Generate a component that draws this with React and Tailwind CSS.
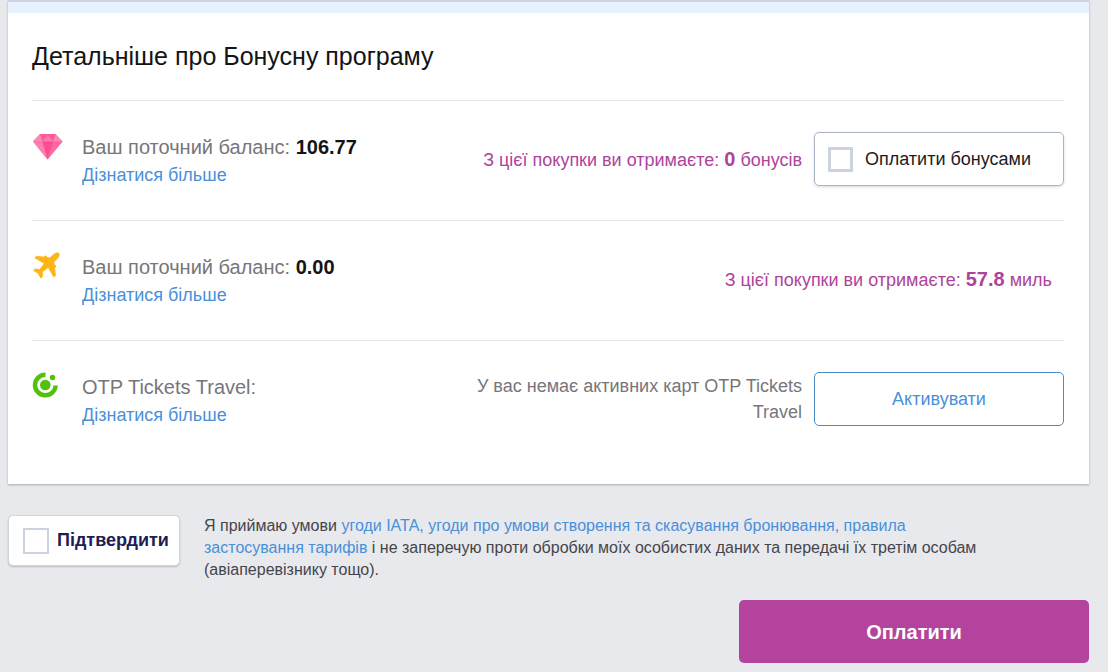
import React from "react";

function DiamondIcon() {
  return (
    <svg width="32" height="29" viewBox="0 0 32 29" aria-hidden="true">
      <path d="M8 2h15.500l7 7.500-15 18L1 9.500z" fill="#ff6ba6" />
      <path d="M8 2h7.700L10 9.500H1z" fill="#ff85b5" />
      <path d="M23.500 2h-7.800l5.800 7.500h9z" fill="#ff85b5" />
      <path d="M8 2l2.500 7.500L15.700 3.500 21 9.500l2.500-7.500z" fill="#fb5b9a" />
      <path d="M15.700 3.500l5.800 6H10z" fill="#ff79ae" />
      <path d="M10 9.500h11.500l-6 18z" fill="#fb4f93" />
      <path d="M1 9.500h9l5.500 18z" fill="#ff7db1" />
      <path d="M30.500 9.500h-9l-6 18z" fill="#ff68a3" />
    </svg>
  );
}

function PlaneIcon() {
  return (
    <svg width="28" height="28" viewBox="0 0 28 28" fill="#fcb514" aria-hidden="true">
      <path
        d="M26.600 1.300C25.300.4 23 1 21.500 2.500L18 5.900 4.500 4.200 2.800 5.700l9.600 5.900-4.700 6-4.400-.7-1.800 1.700 4.700 2.600 2.700 4.900 1.800-1.800-.5-4.300 6-4.700 5.700 9.700 1.600-1.800L21.800 9.900l3.600-3.500c1.500-1.500 2.400-3.900 1.200-5.100z"
        stroke="#fcb514"
        strokeWidth="0.800"
        strokeLinejoin="round"
      />
      <circle cx="13.500" cy="5" r="1.500" />
      <circle cx="22.700" cy="14.200" r="1.500" />
    </svg>
  );
}

function OtpIcon() {
  return (
    <svg width="27" height="27" viewBox="0 0 27 27" aria-hidden="true">
      <path d="M13.500 2.700A10.300 10.300 0 1 0 23.600 13.500" fill="none" stroke="#52c10b" strokeWidth="4.500" />
      <circle cx="13.300" cy="13" r="5.300" fill="#52c10b" />
      <circle cx="20.500" cy="5.500" r="2.700" fill="#52c10b" />
    </svg>
  );
}

function ProgramRow({ icon, title, value, children }) {
  return (
    <li className="flex h-[120px] justify-between border-t border-[#e5e5e5] pt-[31px]">
      <div className="flex">
        <div className="w-[50px] shrink-0">{icon}</div>
        <div className="whitespace-nowrap">
          <p className="text-[20px] leading-[30px] text-[#76767b]">
            {title} {value && <strong className="text-[#141414]">{value}</strong>}
          </p>
          <a href="#more" className="block text-[18px] leading-[26px] text-[#4a90d9]">
            Дізнатися більше
          </a>
        </div>
      </div>
      {children}
    </li>
  );
}

function Reward({ amount, unit }) {
  return (
    <p className="text-right text-[18px] leading-[26px] whitespace-nowrap text-[#ae439b]">
      З цієї покупки ви отримаєте: <strong className="text-[20px]">{amount}</strong> {unit}
    </p>
  );
}

export default function App() {
  return (
    <main className="min-h-screen bg-[#e8e9ed] pr-[19px] pb-[9px] pl-2 font-['Liberation_Sans',Arial,sans-serif]">
      <section className="bg-white shadow-[0_1px_2px_rgba(0,0,0,0.28)]">
        <div className="h-[13px] border-t-2 border-[#cdd3e3] bg-[#e8f1fe]" />
        <div className="pr-[25px] pb-6 pl-6">
          <h1 className="flex h-[87px] items-center text-[25px] text-[#141414]">
            Детальніше про Бонусну програму
          </h1>
          <ul>
            <ProgramRow icon={<DiamondIcon />} title="Ваш поточний баланс:" value="106.77">
              <div className="flex h-[54px] items-center gap-3">
                <Reward amount="0" unit="бонусів" />
                <label className="flex h-[54px] w-[250px] items-center gap-3 rounded-[5px] border border-[#abb3c6] px-[13px] text-[18px] text-[#1c1c1c] shadow-[0_1px_3px_rgba(0,0,0,0.15)]">
                  <input
                    type="checkbox"
                    className="size-[25px] shrink-0 appearance-none border-3 border-[#ccd3e0] bg-white checked:bg-[#4a90d9]"
                  />
                  Оплатити бонусами
                </label>
              </div>
            </ProgramRow>
            <ProgramRow icon={<PlaneIcon />} title="Ваш поточний баланс:" value="0.00">
              <div className="flex h-[54px] items-center pr-3">
                <Reward amount="57.8" unit="миль" />
              </div>
            </ProgramRow>
            <ProgramRow icon={<OtpIcon />} title="OTP Tickets Travel:">
              <div className="flex h-[54px] items-center gap-3">
                <p className="w-[330px] text-right text-[18px] leading-[26px] text-[#76767b]">
                  У вас немає активних карт OTP Tickets Travel
                </p>
                <button
                  type="button"
                  className="h-[54px] w-[250px] rounded-[5px] border border-[#4a8cc4] text-[18px] text-[#4a90d9]"
                >
                  Активувати
                </button>
              </div>
            </ProgramRow>
          </ul>
        </div>
      </section>

      <div className="mt-[31px] flex items-start gap-6">
        <label className="flex h-[51px] w-[172px] shrink-0 items-center gap-2 rounded-[5px] border border-[#d0d5df] bg-white pl-[14px] text-[18px] font-bold text-[#211c55] shadow-[0_1px_2px_rgba(0,0,0,0.2)]">
          <input
            type="checkbox"
            className="size-[26px] shrink-0 appearance-none border-2 border-[#ccd3e0] bg-white checked:bg-[#4a90d9]"
          />
          Підтвердити
        </label>
        <p className="max-w-[800px] text-[16px] leading-[22px] text-[#45454a]">
          Я приймаю умови{" "}
          <a href="#iata" className="text-[#4a90d9]">
            угоди IATA,
          </a>{" "}
          <a href="#booking" className="text-[#4a90d9]">
            угоди про умови створення та скасування бронювання,
          </a>{" "}
          <a href="#tariffs" className="text-[#4a90d9]">
            правила застосування тарифів
          </a>{" "}
          і не заперечую проти обробки моїх особистих даних та передачі їх третім особам (авіаперевізнику тощо).
        </p>
      </div>

      <div className="mt-[19px] flex justify-end">
        <button type="button" className="h-[63px] w-[350px] rounded-[5px] bg-[#b3439d] text-[20px] font-bold text-white">
          Оплатити
        </button>
      </div>
    </main>
  );
}
